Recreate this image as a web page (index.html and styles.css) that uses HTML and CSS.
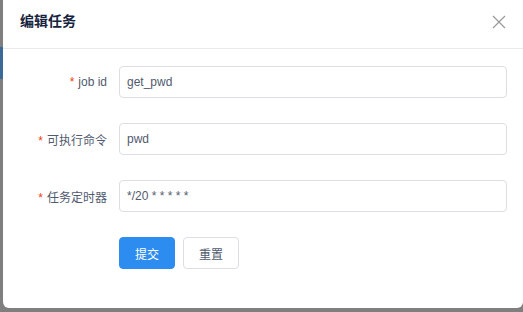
FILE: index.html
```html
<!DOCTYPE html>
<html lang="zh">
<head>
<meta charset="utf-8">
<title>编辑任务</title>
<link rel="stylesheet" href="styles.css">
</head>
<body>
<div class="page">
  <div class="backdrop"><div class="backdrop-bar"></div></div>
  <div class="modal">
    <div class="modal-header">
      <div class="modal-title">编辑任务</div>
      <svg class="close" width="14" height="14" viewBox="0 0 14 14"><path d="M1 1L13 13M13 1L1 13" stroke="#999" stroke-width="1.2" fill="none"/></svg>
    </div>
    <div class="modal-body">
      <div class="form-row">
        <label class="form-label"><span class="req">*</span>job id</label>
        <div class="input">get_pwd</div>
      </div>
      <div class="form-row">
        <label class="form-label"><span class="req">*</span>可执行命令</label>
        <div class="input">pwd</div>
      </div>
      <div class="form-row">
        <label class="form-label"><span class="req">*</span>任务定时器</label>
        <div class="input">*/20 * * * * *</div>
      </div>
      <div class="actions">
        <button class="btn btn-primary">提交</button>
        <button class="btn">重置</button>
      </div>
    </div>
  </div>
</div>
</body>
</html>
```
FILE: styles.css
```css
html, body {
  margin: 0;
  padding: 0;
}
body {
  background: #7f7f7f;
  width: 523px;
  height: 312px;
  overflow: hidden;
  font-family: "Liberation Sans", "Noto Sans CJK SC", sans-serif;
}
.page {
  display: flex;
  align-items: flex-start;
}
.backdrop {
  width: 3px;
  flex: none;
}
.backdrop-bar {
  margin-top: 47px;
  height: 32px;
  background: #3c6a98;
}
.modal {
  width: 520px;
  height: 308px;
  flex: none;
  background: #fff;
  border-radius: 0 0 6px 6px;
  box-sizing: border-box;
}
.modal-header {
  height: 49px;
  box-sizing: border-box;
  border-bottom: 1px solid #e8eaec;
  padding: 11px 17px 0 17px;
  display: flex;
  justify-content: space-between;
  align-items: flex-start;
}
.modal-title {
  font-size: 14px;
  line-height: 20px;
  font-weight: bold;
  color: #17233d;
}
.close {
  margin-top: 4px;
  margin-right: 0;
}
.modal-body {
  padding: 17px 16px 0 0;
}
.form-row {
  display: flex;
  align-items: center;
  height: 32px;
  margin-bottom: 25px;
}
.form-label {
  width: 116px;
  flex: none;
  box-sizing: border-box;
  padding-right: 12px;
  text-align: right;
  font-size: 12px;
  color: #515a6e;
}
.req {
  color: #ed4014;
  margin-right: 4px;
  font-family: "Liberation Sans", sans-serif;
}
.input {
  flex: 1;
  height: 32px;
  box-sizing: border-box;
  border: 1px solid #dcdee2;
  border-radius: 4px;
  padding: 0 7px;
  display: flex;
  align-items: center;
  font-size: 12px;
  color: #515a6e;
}
.actions {
  display: flex;
  gap: 8px;
  margin-left: 116px;
}
.btn {
  height: 32px;
  padding: 0 15px;
  border: 1px solid #dcdee2;
  border-radius: 4px;
  background: #fff;
  color: #515a6e;
  font-size: 12px;
  font-family: "Liberation Sans", "Noto Sans CJK SC", sans-serif;
}
.btn-primary {
  background: #2d8cf0;
  border-color: #2d8cf0;
  color: #fff;
}
```
